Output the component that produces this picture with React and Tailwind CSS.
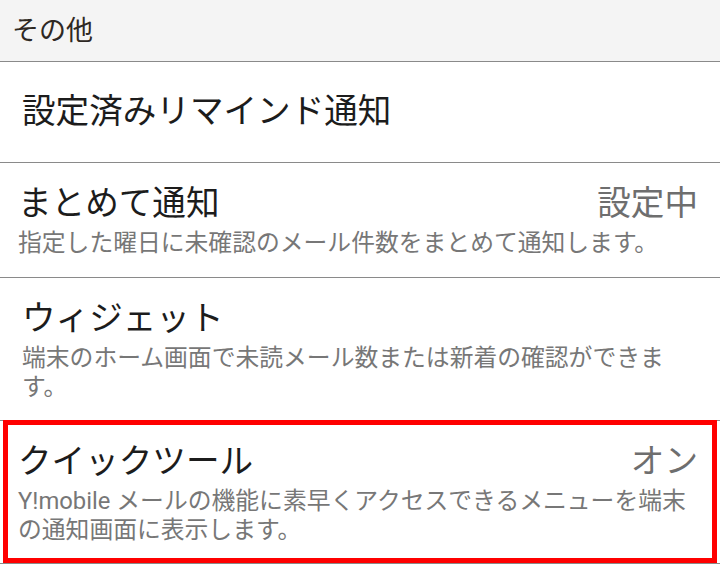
import React from 'react';

// settings list: "その他" section
const rows = [
  { id: 'remind', title: '設定済みリマインド通知', pl: 'pl-[22px]' },
  {
    id: 'summary',
    title: 'まとめて通知',
    value: '設定中',
    lines: ['指定した曜日に未確認のメール件数をまとめて通知します。'],
    pl: 'pl-[18px]',
    pb: 'pb-[19px]',
  },
  {
    id: 'widget',
    title: 'ウィジェット',
    lines: ['端末のホーム画面で未読メール数または新着の確認ができま', 'す。'],
    pl: 'pl-[22px]',
    pb: 'pb-[18px]',
  },
  {
    id: 'quick',
    title: 'クイックツール',
    value: 'オン',
    lines: ['Y!mobile メールの機能に素早くアクセスできるメニューを端末', 'の通知画面に表示します。'],
    pl: 'pl-[18px]',
    pb: 'pb-[18px]',
    highlight: true,
  },
];

const SettingRow = ({ row }) => {
  if (!row.lines) {
    return (
      <div className={`border-b border-[#8a8a8a] py-[30px] pr-[23px] ${row.pl}`}>
        <div className="text-[33.6px] leading-[40px] text-[#1c1c1c]">{row.title}</div>
      </div>
    );
  }

  return (
    <div className={`relative border-b border-[#8a8a8a] pt-[21px] pr-[22px] ${row.pl} ${row.pb}`}>
      <div className="flex items-center justify-between">
        <span className="text-[33.6px] leading-[40px] text-[#1c1c1c]">{row.title}</span>
        {row.value && (
          <span className="text-[33.6px] leading-[40px] text-[#6e6e6e]">{row.value}</span>
        )}
      </div>
      <p className="mt-[5px] whitespace-nowrap text-[23.8px] leading-[29px] text-[#777777]">
        {row.lines.map((line, i) => (
          <React.Fragment key={i}>
            {i > 0 && <br />}
            {line}
          </React.Fragment>
        ))}
      </p>
      {/* red highlight frame drawn over the row */}
      {row.highlight && (
        <div className="pointer-events-none absolute -top-px left-[3px] right-[3px] bottom-0 border-[5px] border-[#ff0000]" />
      )}
    </div>
  );
};

const App = () => {
  return (
    <div className="h-[565px] w-[720px] overflow-hidden bg-white font-['Roboto','Noto_Sans_CJK_JP',sans-serif]">
      <div className="flex h-[62px] items-center border-b border-[#8a8a8a] bg-[#f4f4f4] pl-[12px]">
        <span className="text-[27px] leading-[32px] text-[#2e2823]">その他</span>
      </div>
      {rows.map((row) => (
        <SettingRow key={row.id} row={row} />
      ))}
    </div>
  );
};

export default App;
